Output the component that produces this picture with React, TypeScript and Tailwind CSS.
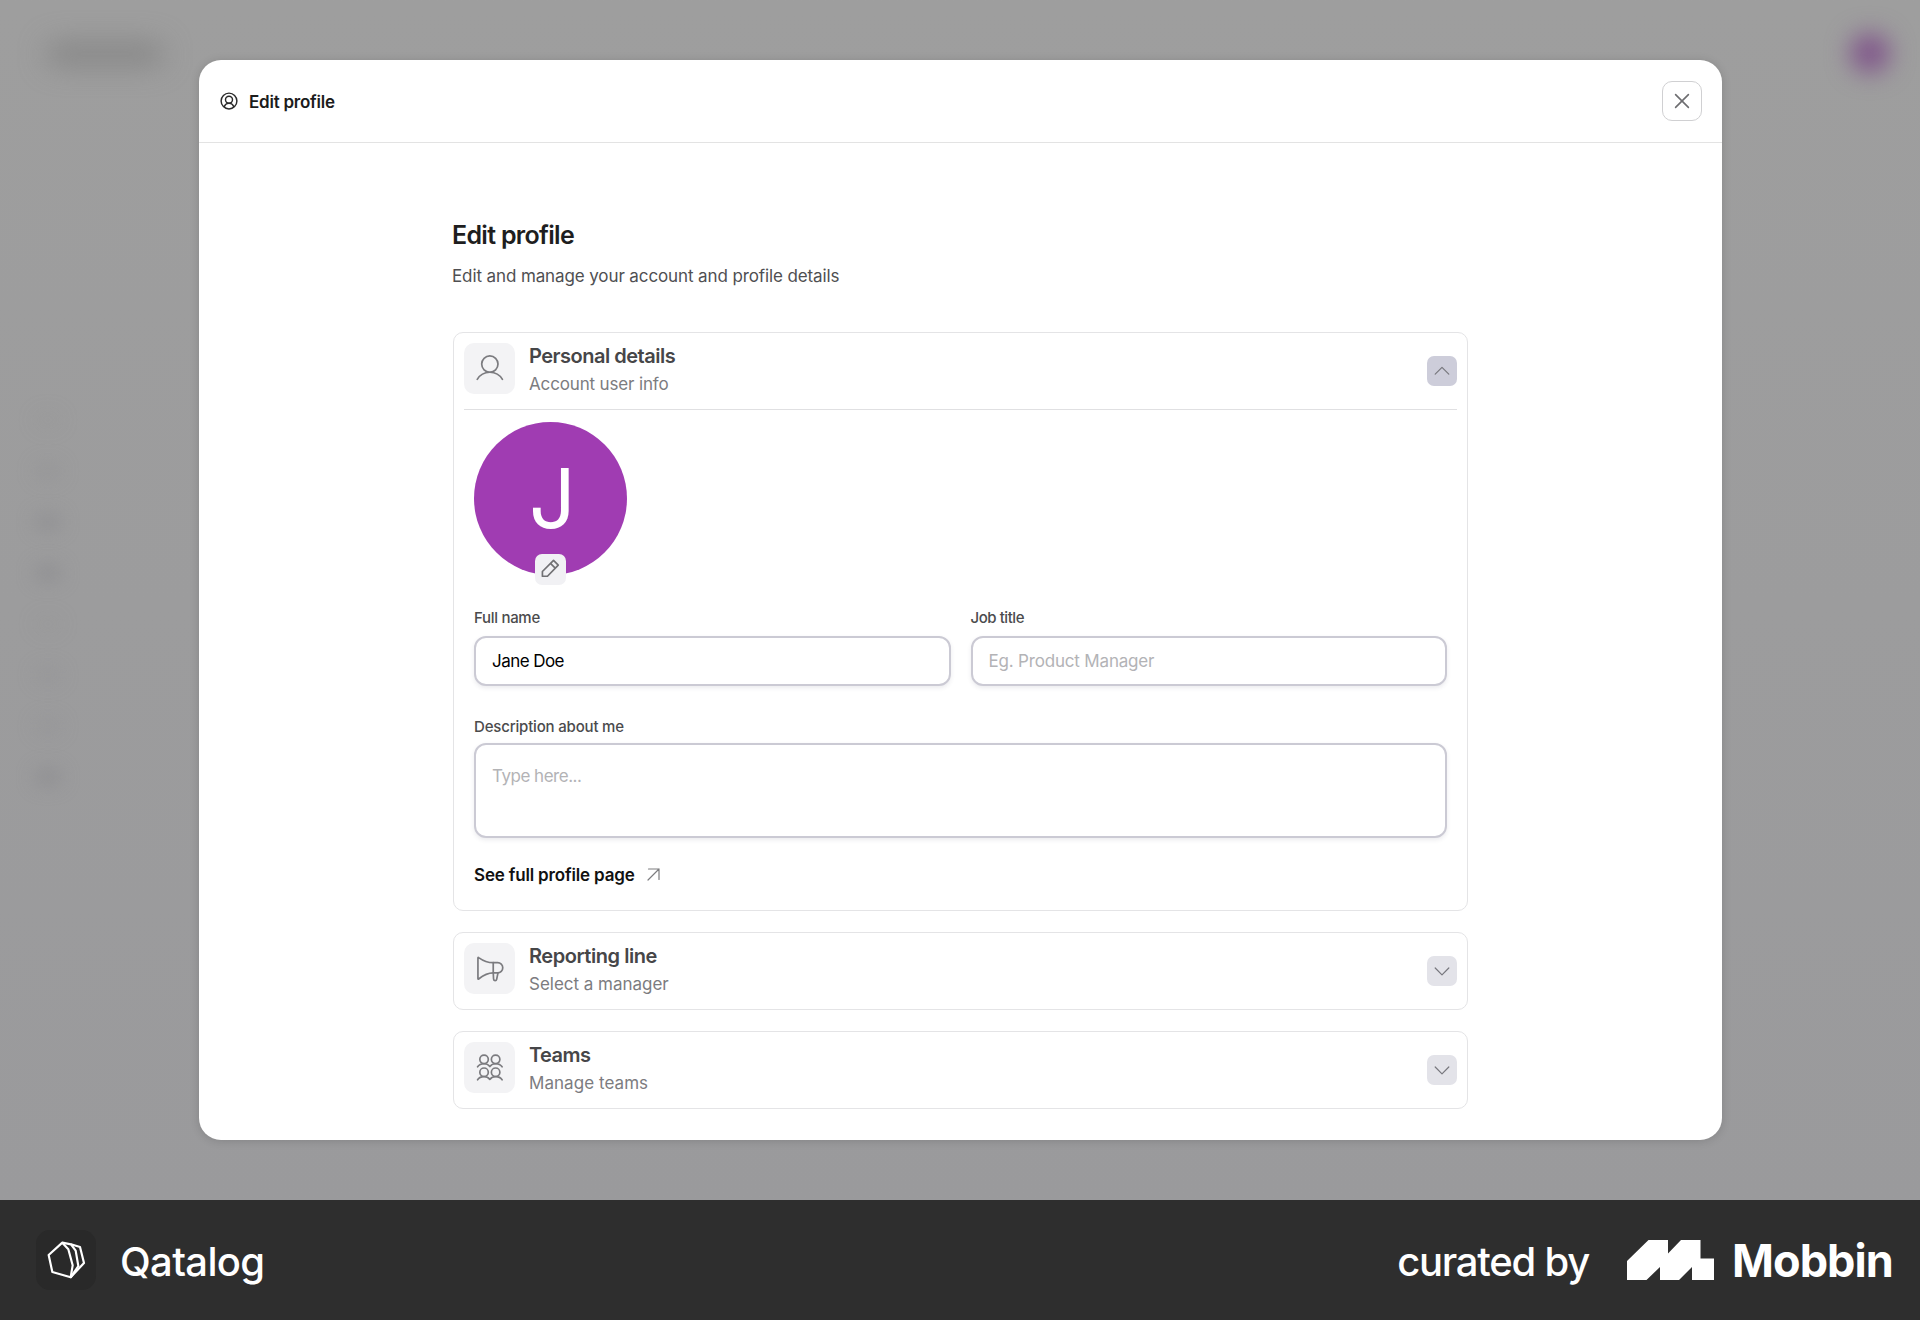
import type { ReactNode } from "react";

function UserIcon() {
  return (
    <svg viewBox="0 0 150 150" className="size-full" fill="none" stroke="#7b7b7f" strokeWidth="5" strokeLinecap="round">
      <circle cx="76" cy="62" r="24" />
      <path d="M39 107C47 93 60 86 76 86s29 7 37 21" />
    </svg>
  );
}

function MegaphoneIcon() {
  return (
    <svg viewBox="0 0 150 150" className="size-full" fill="none" stroke="#7b7b7f" strokeWidth="5" strokeLinecap="round" strokeLinejoin="round">
      <path d="M41 44v61c0 1 1 2 2 1 14-11 28-18 43-18h13a15 15 0 0 0 0-30H86c-15 0-29-5-43-15-1-1-2 0-2 1z" />
      <path d="M86 58v30l1 18c0 6 8 6 9 1l4-19" />
    </svg>
  );
}

function TeamsIcon() {
  return (
    <svg viewBox="0 0 150 150" className="size-full" fill="none" stroke="#7b7b7f" strokeWidth="5" strokeLinecap="round" strokeLinejoin="round">
      <circle cx="59" cy="51" r="12.5" />
      <circle cx="93" cy="51" r="12.5" />
      <path d="M40 73c4-6 11-9 19-9 7 0 13 3 17 8 4-5 10-8 17-8 8 0 15 3 19 9" />
      <circle cx="59" cy="89" r="12.5" />
      <circle cx="93" cy="89" r="12.5" />
      <path d="M40 111c4-6 11-9 19-9 7 0 13 3 17 8 4-5 10-8 17-8 8 0 15 3 19 9" />
    </svg>
  );
}

function Chevron({ up = false }: { up?: boolean }) {
  return (
    <span
      className={
        up
          ? "mt-[13px] flex size-[30px] items-center justify-center rounded-[7px] bg-[#cdcdda]"
          : "mt-[13px] flex size-[30px] items-center justify-center rounded-[7px] bg-[#e3e3e9]"
      }
    >
      <svg width="16" height="10" viewBox="0 0 16 10" fill="none" stroke="#77777d" strokeWidth="1.2" strokeLinecap="round" strokeLinejoin="round">
        {up ? <path d="M1.200 8.200 8 1.400l6.800 6.800" /> : <path d="M1.200 2 8 8.800 14.800 2" />}
      </svg>
    </span>
  );
}

interface SectionProps {
  icon: ReactNode;
  title: ReactNode;
  subtitle: ReactNode;
  open?: boolean;
  children?: ReactNode;
}

function Section({ icon, title, subtitle, open, children }: SectionProps) {
  return (
    <section className="rounded-[10px] border border-[#e4e4e6] p-[10px]">
      <div className={open ? "flex h-[66px] items-start" : "flex h-14 items-start"}>
        <div className="size-[51px] rounded-[10px] bg-[#f3f3f5]">{icon}</div>
        <div className="ml-[14px] grow whitespace-nowrap">
          <h2 className="h-[27px] text-[20px] leading-[27px] font-[560] text-[#464648]">{title}</h2>
          <p className="text-[17px] leading-[28px] text-[#7c7c7f]">{subtitle}</p>
        </div>
        <Chevron up={open} />
      </div>
      {children}
    </section>
  );
}

const label = "block text-[15px] leading-5 font-[550] text-[#4b4b4d]";
const field =
  "block w-full rounded-[12px] border-2 border-[#cbcad4] bg-white px-4 text-[17px] text-black placeholder:text-[#b3b3b6] shadow-[0_2px_4px_rgba(60,60,90,0.1)] outline-none";

const navBlurs = [
  "bg-[#8a8a8e]/15",
  "bg-[#8a8a8e]/30",
  "bg-[#86868a]/45",
  "bg-[#86868a]/50",
  "bg-[#8a8a8e]/15",
  "bg-[#8a8a8e]/25",
  "bg-[#8a8a8e]/25",
  "bg-[#86868a]/50",
];

export default function App() {
  return (
    <div className="flex h-[1320px] w-[1920px] flex-col overflow-hidden font-['Inter','Liberation_Sans',sans-serif]">
      <main className="relative h-[1200px] bg-linear-to-b from-[#9e9e9e] to-[#9a9a9c]">
        <div className="absolute top-[42px] left-[46px] h-6 w-[118px] rounded-full bg-[#787878]/60 blur-[14px]" />
        <div className="absolute top-[33px] left-[1850px] size-[40px] rounded-full bg-[#80568a] blur-[12px]" />
        <div className="absolute top-[411px] left-[34px] flex flex-col gap-[33px]">
          {navBlurs.map((tone, i) => (
            <span key={i} className={`h-[18px] w-7 rounded-full blur-[9px] ${tone}`} />
          ))}
        </div>

        <div
          role="dialog"
          aria-label="Edit profile"
          className="absolute top-[60px] left-[199px] flex h-[1080px] w-[1523px] flex-col rounded-[22px] bg-white shadow-[0_1px_10px_rgba(0,0,0,0.15)]"
        >
          <header className="flex h-[83px] shrink-0 items-center border-b border-[#e3e3e3] pr-5 pl-[21px]">
            <svg width="18" height="18" viewBox="0 0 18 18" fill="none" stroke="#2a2a2a" strokeWidth="1.450">
              <circle cx="9" cy="9" r="7.900" />
              <circle cx="9" cy="7.700" r="3.500" />
              <path d="M4.200 15.200C4.800 12.700 6.600 11.200 9 11.200s4.200 1.500 4.800 4" />
            </svg>
            <span className="mt-[3px] ml-[11px] text-[17px] font-[560] tracking-[-0.240px] text-[#1c1c1c]">Edit profile</span>
            <button className="ml-auto flex size-10 items-center justify-center rounded-[10px] border border-[#d0d0d2]">
              <svg width="16" height="16" viewBox="0 0 16 16" stroke="#6d6d70" strokeWidth="1.600" strokeLinecap="round">
                <path d="M1.600 1.600l12.800 12.800M14.400 1.600L1.600 14.400" />
              </svg>
            </button>
          </header>

          <div className="ml-[254px] w-[1015px] pt-[76px]">
            <h1 className="-ml-px text-[25px] leading-8 font-semibold tracking-[-0.690px] text-[#1e1e20]">Edit profile</h1>
            <p className="mt-[13px] -ml-px text-[17px] leading-6 tracking-[-0.110px] text-[#4f4f52]">
              Edit and manage your account and profile details
            </p>

            <div className="mt-11 flex flex-col gap-[21px]">
              <Section
                open
                icon={<UserIcon />}
                title={<span className="tracking-[-0.490px]">Personal details</span>}
                subtitle={<span className="tracking-[-0.150px]">Account user info</span>}
              >
                <div className="h-[491px] border-t border-[#e0e0e2] px-[10px] pt-3">
                  <div className="relative flex size-[153px] items-center justify-center rounded-full bg-[#a03cb2]">
                    <span className="mt-px ml-1 text-[82px] leading-none text-white">J</span>
                    <button className="absolute top-[132px] left-[61px] size-[31px] rounded-[7px] bg-[#f1f1f4]">
                      <svg viewBox="0 0 92 92" className="size-full" fill="none" stroke="#717174" strokeWidth="5" strokeLinejoin="round">
                        <path d="M22 66V52L55 19L69 33L37 66Z" />
                        <path d="M46 28L60 42" />
                      </svg>
                    </button>
                  </div>

                  <div className="mt-[33px] grid grid-cols-2 gap-5">
                    <div>
                      <label className={label} htmlFor="name">
                        <span className="tracking-[-0.300px]">Full name</span>
                      </label>
                      <input id="name" className={`${field} mt-2 h-[50px] tracking-[-0.550px]`} defaultValue="Jane Doe" />
                    </div>
                    <div>
                      <label className={label} htmlFor="job">
                        <span className="tracking-[-0.450px]">Job title</span>
                      </label>
                      <input id="job" className={`${field} mt-2 h-[50px] tracking-[-0.180px]`} placeholder="Eg. Product Manager" />
                    </div>
                  </div>

                  <div className="mt-[31px]">
                    <label className={label} htmlFor="about">
                      <span className="tracking-[-0.180px]">Description about me</span>
                    </label>
                    <textarea
                      id="about"
                      className={`${field} mt-1.5 h-[95px] resize-none pt-[19px] leading-6 tracking-[-0.490px]`}
                      placeholder="Type here..."
                    />
                  </div>

                  <a className="mt-[25px] flex items-center text-[17px] leading-6 font-[560] tracking-[-0.170px] text-[#111]">
                    See full profile page
                    <svg className="ml-3 -mt-0.5" width="13" height="13" viewBox="0 0 13 13" fill="none" stroke="#7c7c7f" strokeWidth="1.200" strokeLinecap="round" strokeLinejoin="round">
                      <path d="M1 12L12 1M1.500 1H12V11.500" />
                    </svg>
                  </a>
                </div>
              </Section>
              <Section
                icon={<MegaphoneIcon />}
                title={<span className="tracking-[-0.450px]">Reporting line</span>}
                subtitle={<span className="tracking-[-0.020px]">Select a manager</span>}
              />
              <Section
                icon={<TeamsIcon />}
                title={<span className="tracking-[-0.550px]">Teams</span>}
                subtitle={<span className="tracking-[0.050px]">Manage teams</span>}
              />
            </div>
          </div>
        </div>
      </main>

      <footer className="flex h-[120px] items-center bg-[#2e2e2e] pr-[27px] pl-9 text-[40px] leading-[48px] font-medium whitespace-nowrap text-white">
        <div className="size-[60px] rounded-[14px] bg-[#292929]">
          <svg viewBox="0 0 192 192" className="-mt-0.5 size-16 max-w-none" fill="none" stroke="#fff" strokeWidth="6.500" strokeLinejoin="round">
            <path d="M79 44L38 81L49 132L104 148L110 112L97 64Z" />
            <path d="M79 44L105 49L119 68L127 114L104 148" />
            <path d="M105 49L132 57L144 105L104 148" />
          </svg>
        </div>
        <span className="mt-[3px] ml-6 tracking-[-0.650px]">Qatalog</span>
        <span className="mt-[3px] ml-auto tracking-[-1.250px]">curated by</span>
        <svg className="ml-[38px]" width="87" height="40" viewBox="0 0 87 40" fill="#fff">
          <path d="M0 21L21.500 0H41V13.500L54 0H73.500V18.500H87V40H65V27L52 40H33V27L19.500 40H0Z" />
        </svg>
        <span className="mt-0.5 ml-[18px] text-[45px] font-bold tracking-[-0.900px]">Mobbin</span>
      </footer>
    </div>
  );
}
